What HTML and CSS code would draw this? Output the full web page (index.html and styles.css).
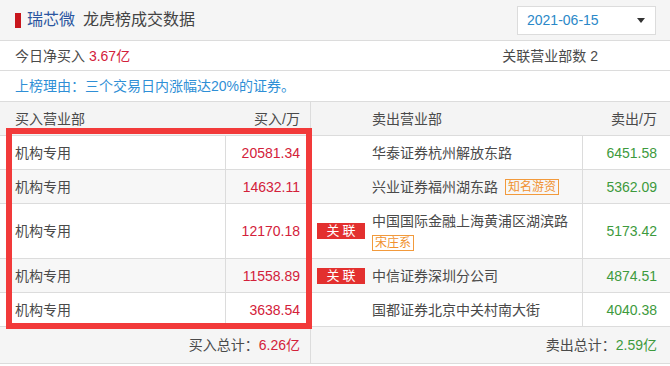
FILE: index.html
```html
<!DOCTYPE html>
<html lang="zh-CN">
<head>
<meta charset="utf-8">
<title>瑞芯微 龙虎榜成交数据</title>
<link rel="stylesheet" href="styles.css">
</head>
<body>
<div class="page">
  <div class="head">
    <div class="title"><span class="mark"></span><span class="stock">瑞芯微</span><span class="tname">龙虎榜成交数据</span></div>
    <div class="select"><span class="date">2021-06-15</span><span class="caret"></span></div>
  </div>
  <div class="summary">
    <span>今日净买入 <span class="up">3.67亿</span></span>
    <span class="rel">关联营业部数 2</span>
  </div>
  <div class="reason">上榜理由：三个交易日内涨幅达20%的证券。</div>
  <div class="table">
    <div class="row thead">
      <div class="c name">买入营业部</div>
      <div class="c amt nosep">买入/万</div>
      <div class="c tagc"></div>
      <div class="c sname">卖出营业部</div>
      <div class="c samt nosep">卖出/万</div>
    </div>
    <div class="row">
      <div class="c name">机构专用</div>
      <div class="c amt up">20581.34</div>
      <div class="c tagc"></div>
      <div class="c sname">华泰证券杭州解放东路</div>
      <div class="c samt down">6451.58</div>
    </div>
    <div class="row alt">
      <div class="c name">机构专用</div>
      <div class="c amt up">14632.11</div>
      <div class="c tagc"></div>
      <div class="c sname">兴业证券福州湖东路<span class="tag">知名游资</span></div>
      <div class="c samt down">5362.09</div>
    </div>
    <div class="row tall">
      <div class="c name">机构专用</div>
      <div class="c amt up">12170.18</div>
      <div class="c tagc"><span class="badge">关联</span></div>
      <div class="c sname col">
        <span>中国国际金融上海黄浦区湖滨路</span>
        <span><span class="tag first">宋庄系</span></span>
      </div>
      <div class="c samt down">5173.42</div>
    </div>
    <div class="row alt">
      <div class="c name">机构专用</div>
      <div class="c amt up">11558.89</div>
      <div class="c tagc"><span class="badge">关联</span></div>
      <div class="c sname">中信证券深圳分公司</div>
      <div class="c samt down">4874.51</div>
    </div>
    <div class="row">
      <div class="c name">机构专用</div>
      <div class="c amt up">3638.54</div>
      <div class="c tagc"></div>
      <div class="c sname">国都证券北京中关村南大街</div>
      <div class="c samt down">4040.38</div>
    </div>
    <div class="row total">
      <div class="c tl">买入总计：<span class="up">6.26亿</span></div>
      <div class="c tr">卖出总计：<span class="down">2.59亿</span></div>
    </div>
    <div class="highlight"></div>
  </div>
</div>
</body>
</html>
```

FILE: styles.css
```css
* { box-sizing: border-box; }
html, body { margin: 0; padding: 0; background: #fff; }
body {
  font-family: "Liberation Sans", "Noto Sans CJK SC", sans-serif;
  font-size: 14px;
  line-height: 20px;
  color: #4a4a4a;
}
.page { width: 670px; }

.head {
  height: 41px;
  background: #f5f5f5;
  border-bottom: 1px solid #dcdcdc;
  display: flex;
  align-items: center;
  justify-content: space-between;
  padding: 0 14px 0 15px;
}
.title { display: flex; align-items: center; font-size: 16px; }
.mark { width: 6px; height: 15px; background: #c8161d; margin-right: 6px; }
.stock { color: #2b55a0; margin-right: 8px; }
.tname { color: #444; }
.select {
  width: 139px;
  height: 29px;
  background: #fff;
  border: 1px solid #dcdcdc;
  display: flex;
  align-items: center;
  justify-content: space-between;
  padding: 0 10px 0 9px;
}
.date { color: #2a88c8; font-size: 14px; }
.caret {
  width: 0; height: 0;
  border-left: 4px solid transparent;
  border-right: 4px solid transparent;
  border-top: 5px solid #333;
}

.summary {
  height: 30px;
  border-bottom: 1px solid #dcdcdc;
  display: flex;
  align-items: center;
  justify-content: space-between;
  padding: 0 72px 0 15px;
}
.up { color: #d3213a; }
.down { color: #3d9a3d; }

.reason {
  height: 30px;
  display: flex;
  align-items: center;
  padding-left: 15px;
  color: #2f8fd6;
}

.table { position: relative; border-top: 1px solid #dcdcdc; }
.row {
  display: grid;
  grid-template-columns: 225px 85px 58px 214px 88px;
  height: 34px;
  border-bottom: 1px solid #dcdcdc;
}
.row.alt { background: #f7f7f7; }
.row.thead { background: #f4f4f4; }
.row.tall { height: 55px; }
.row.total { grid-template-columns: 310px 360px; height: 37px; background: #f5f5f5; }
.c { display: flex; align-items: center; }
.name { padding-left: 15px; }
.amt { justify-content: flex-end; padding-right: 10px; border-left: 1px solid #dcdcdc; }
.tagc { border-left: 1px solid #dcdcdc; padding-left: 6px; }
.sname { padding-left: 4px; }
.samt { justify-content: flex-end; padding-right: 13px; border-left: 1px solid #dcdcdc; }
.nosep { border-left-color: transparent; }
.col { flex-direction: column; align-items: flex-start; justify-content: center; gap: 1px; }
.tl { justify-content: flex-end; padding-right: 10px; }
.tr { justify-content: flex-end; padding-right: 13px; border-left: 1px solid #dcdcdc; }

.badge {
  display: inline-flex;
  align-items: center;
  justify-content: center;
  width: 48px;
  height: 16px;
  background: #e3302f;
  color: #fff;
  font-size: 13px;
  line-height: 16px;
  letter-spacing: 3px;
  padding-left: 3px;
}
.tag {
  display: inline-block;
  margin-left: 7px;
  border: 1px solid #f29a3c;
  color: #f0912e;
  font-size: 12px;
  line-height: 14px;
  padding: 0 2px;
}
.tag.first { margin-left: 0; }

.highlight {
  position: absolute;
  left: 6px;
  top: 26px;
  width: 306px;
  height: 201px;
  border: 6px solid #f23a3a;
  pointer-events: none;
}
```
